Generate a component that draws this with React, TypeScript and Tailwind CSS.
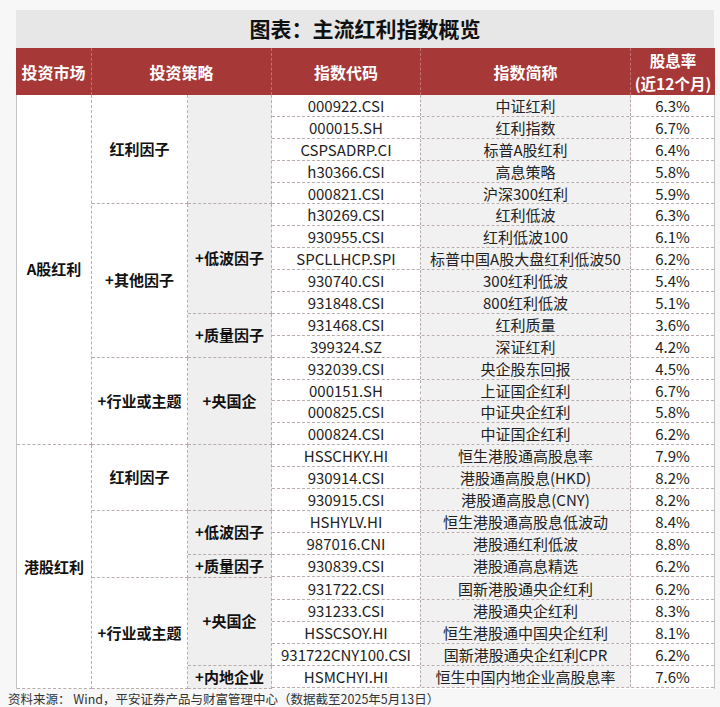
import React from "react";

type Item = { code: string; name: string; rate: string };
type Sub = { name: string; rows: Item[] };
type Strategy = { name: string; subs: Sub[] };
type Market = { name: string; strategies: Strategy[] };

const markets: Market[] = [
  {
    name: "A股红利",
    strategies: [
      {
        name: "红利因子",
        subs: [
          {
            name: "",
            rows: [
              { code: "000922.CSI", name: "中证红利", rate: "6.3%" },
              { code: "000015.SH", name: "红利指数", rate: "6.7%" },
              { code: "CSPSADRP.CI", name: "标普A股红利", rate: "6.4%" },
              { code: "h30366.CSI", name: "高息策略", rate: "5.8%" },
              { code: "000821.CSI", name: "沪深300红利", rate: "5.9%" },
            ],
          },
        ],
      },
      {
        name: "+其他因子",
        subs: [
          {
            name: "+低波因子",
            rows: [
              { code: "h30269.CSI", name: "红利低波", rate: "6.3%" },
              { code: "930955.CSI", name: "红利低波100", rate: "6.1%" },
              { code: "SPCLLHCP.SPI", name: "标普中国A股大盘红利低波50", rate: "6.2%" },
              { code: "930740.CSI", name: "300红利低波", rate: "5.4%" },
              { code: "931848.CSI", name: "800红利低波", rate: "5.1%" },
            ],
          },
          {
            name: "+质量因子",
            rows: [
              { code: "931468.CSI", name: "红利质量", rate: "3.6%" },
              { code: "399324.SZ", name: "深证红利", rate: "4.2%" },
            ],
          },
        ],
      },
      {
        name: "+行业或主题",
        subs: [
          {
            name: "+央国企",
            rows: [
              { code: "932039.CSI", name: "央企股东回报", rate: "4.5%" },
              { code: "000151.SH", name: "上证国企红利", rate: "6.7%" },
              { code: "000825.CSI", name: "中证央企红利", rate: "5.8%" },
              { code: "000824.CSI", name: "中证国企红利", rate: "6.2%" },
            ],
          },
        ],
      },
    ],
  },
  {
    name: "港股红利",
    strategies: [
      {
        name: "红利因子",
        subs: [
          {
            name: "",
            rows: [
              { code: "HSSCHKY.HI", name: "恒生港股通高股息率", rate: "7.9%" },
              { code: "930914.CSI", name: "港股通高股息(HKD)", rate: "8.2%" },
              { code: "930915.CSI", name: "港股通高股息(CNY)", rate: "8.2%" },
            ],
          },
        ],
      },
      {
        name: "",
        subs: [
          {
            name: "+低波因子",
            rows: [
              { code: "HSHYLV.HI", name: "恒生港股通高股息低波动", rate: "8.4%" },
              { code: "987016.CNI", name: "港股通红利低波", rate: "8.8%" },
            ],
          },
          {
            name: "+质量因子",
            rows: [{ code: "930839.CSI", name: "港股通高息精选", rate: "6.2%" }],
          },
        ],
      },
      {
        name: "+行业或主题",
        subs: [
          {
            name: "+央国企",
            rows: [
              { code: "931722.CSI", name: "国新港股通央企红利", rate: "6.2%" },
              { code: "931233.CSI", name: "港股通央企红利", rate: "8.3%" },
              { code: "HSSCSOY.HI", name: "恒生港股通中国央企红利", rate: "8.1%" },
              { code: "931722CNY100.CSI", name: "国新港股通央企红利CPR", rate: "6.2%" },
            ],
          },
          {
            name: "+内地企业",
            rows: [{ code: "HSMCHYI.HI", name: "恒生中国内地企业高股息率", rate: "7.6%" }],
          },
        ],
      },
    ],
  },
];

const DataRow = ({ item }: { item: Item }) => (
  <div className="flex h-[21.9px] border-b border-dashed border-[#b8acac] text-[15px] leading-none text-[#222]">
    <div className="flex w-[149px] items-center justify-center border-r border-dashed border-[#b8acac]">
      {item.code}
    </div>
    <div className="flex w-[210px] items-center justify-center whitespace-nowrap border-r border-dashed border-[#b8acac] bg-[#f1f1f1]">
      {item.name}
    </div>
    <div className="flex flex-1 items-center justify-center">{item.rate}</div>
  </div>
);

export default function App() {
  return (
    <div className="h-[707px] w-[720px] overflow-hidden bg-[#f7f7f7] pl-4 pt-[10px] font-['Noto_Sans_CJK_SC',sans-serif]">
      <div className="w-[699px]">
        {/* title */}
        <div className="flex h-[38px] w-[698px] items-center justify-center bg-[#e7e7e7] text-[21px] font-bold text-[#111]">
          图表：主流红利指数概览
        </div>

        {/* header */}
        <div className="flex h-[47px] bg-[#a73838] text-[16px] font-bold text-white">
          <div className="flex w-[76px] items-center justify-center border-r border-dashed border-[#c47474]">投资市场</div>
          <div className="flex w-[180px] items-center justify-center border-r border-dashed border-[#c47474]">投资策略</div>
          <div className="flex w-[149px] items-center justify-center border-r border-dashed border-[#c47474]">指数代码</div>
          <div className="flex w-[210px] items-center justify-center border-r border-dashed border-[#c47474]">指数简称</div>
          <div className="flex flex-1 items-center justify-center text-center text-[15.5px] leading-[22.5px]">
            <p>
              股息率
              <br />
              (近12个月)
            </p>
          </div>
        </div>

        {/* body */}
        <div className="border-x border-solid border-[#c4c4c4] bg-white">
          {markets.map((m) => (
            <div key={m.name} className="flex">
              <div className="flex w-[75px] items-center justify-center border-b border-r border-dashed border-[#b8acac] text-[15px] font-bold text-[#111]">
                {m.name}
              </div>
              <div className="flex flex-1 flex-col">
                {m.strategies.map((s, si) => (
                  <div key={si} className="flex">
                    <div className="flex w-[96px] items-center justify-center whitespace-nowrap border-b border-r border-dashed border-[#b8acac] text-[15px] font-bold text-[#111]">
                      {s.name}
                    </div>
                    <div className="flex flex-1 flex-col">
                      {s.subs.map((sub, bi) => (
                        <div key={bi} className="flex">
                          <div className="flex w-[84px] items-center justify-center whitespace-nowrap border-b border-r border-dashed border-[#b8acac] bg-[#efefef] text-[15px] font-bold text-[#111]">
                            {sub.name}
                          </div>
                          <div className="flex flex-1 flex-col">
                            {sub.rows.map((r) => (
                              <DataRow key={r.code} item={r} />
                            ))}
                          </div>
                        </div>
                      ))}
                    </div>
                  </div>
                ))}
              </div>
            </div>
          ))}
        </div>
      </div>

      {/* footer */}
      <div className="-ml-[8px] pt-[1px] text-[12.5px] leading-[18px] text-[#333]">
        资料来源： Wind，平安证券产品与财富管理中心（数据截至2025年5月13日）
      </div>
    </div>
  );
}
